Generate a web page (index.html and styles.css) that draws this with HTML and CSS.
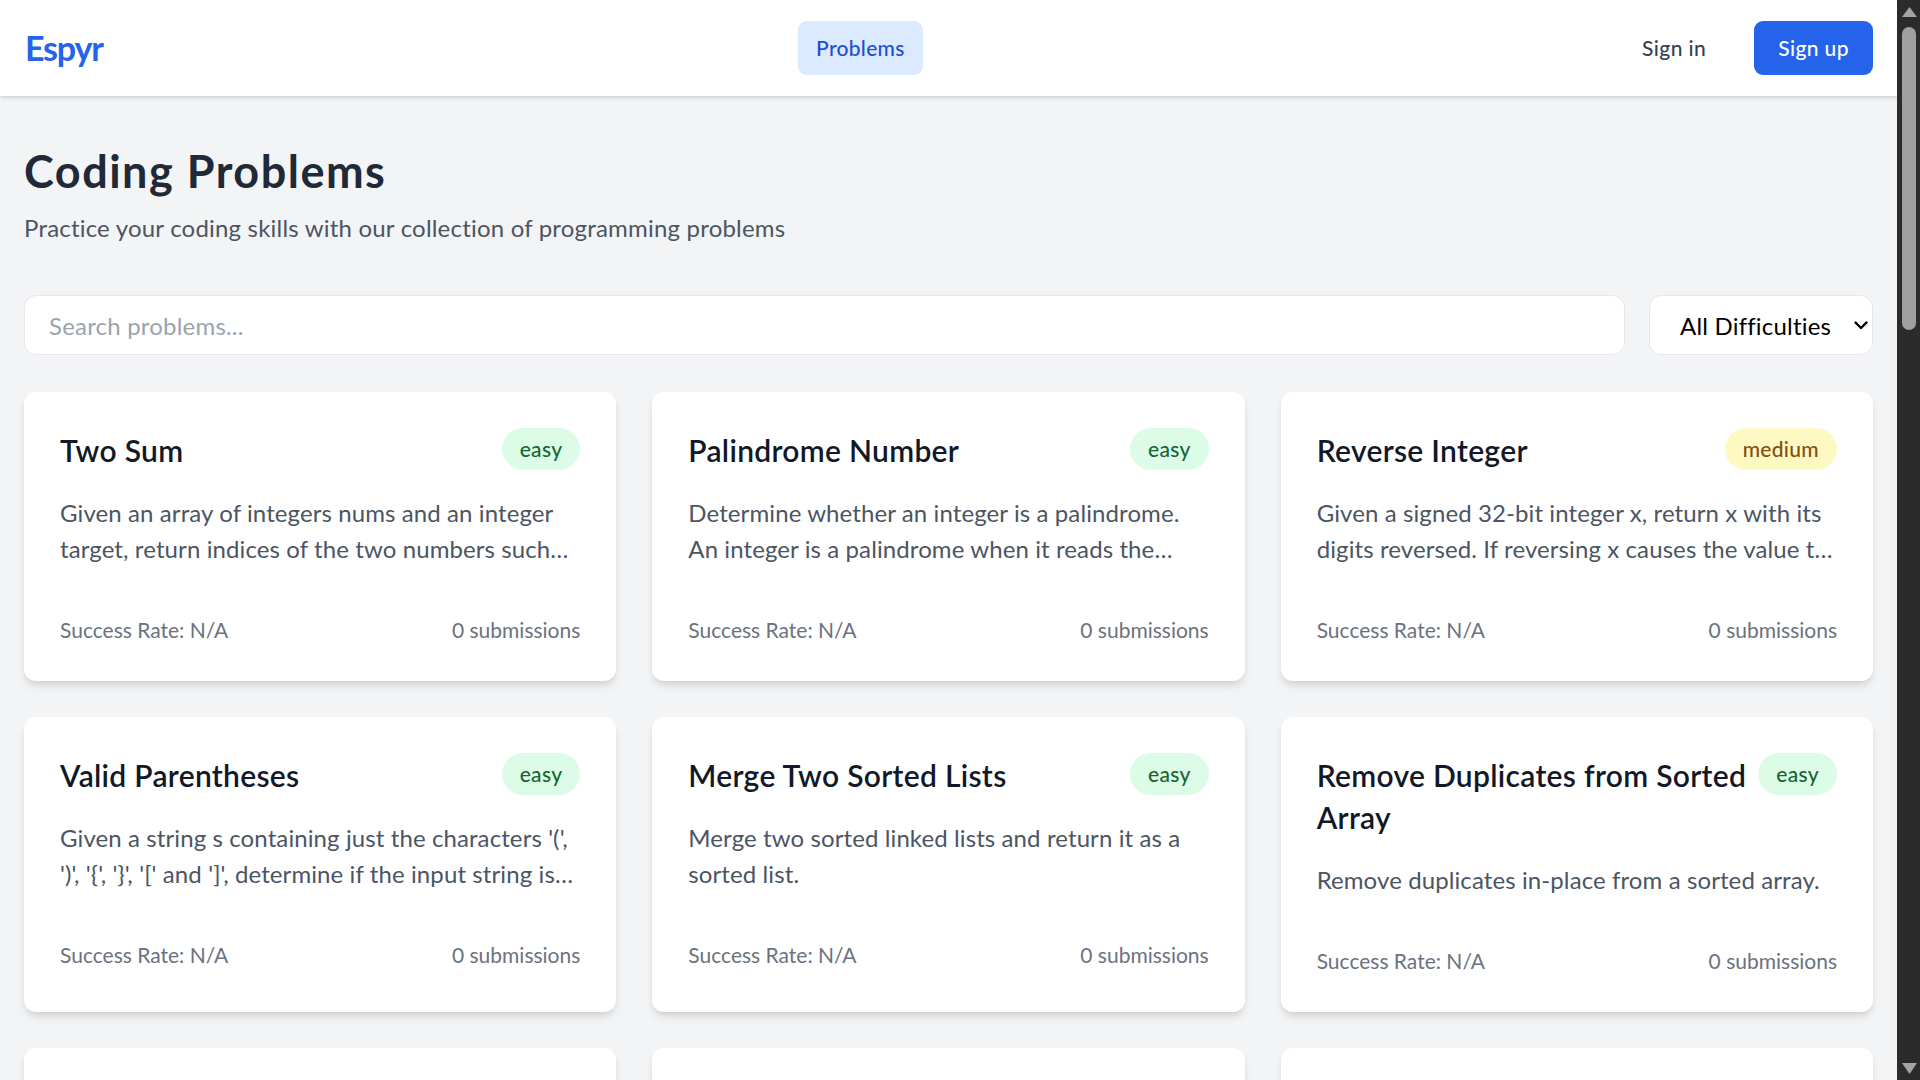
FILE: index.html
```html
<!DOCTYPE html>
<html lang="en">
<head>
<meta charset="utf-8">
<title>Espyr - Coding Problems</title>
<link rel="stylesheet" href="styles.css">
</head>
<body>
<div class="page">
  <nav class="nav">
    <div class="nav-inner">
      <a class="logo" href="#">Espyr</a>
      <div class="nav-links">
        <a class="nav-link active" href="#">Problems</a>
      </div>
      <div class="auth">
        <a class="btn btn-ghost" href="#">Sign in</a>
        <a class="btn btn-primary" href="#">Sign up</a>
      </div>
    </div>
  </nav>

  <main class="main">
    <header class="page-head">
      <h1 class="title">Coding Problems</h1>
      <p class="subtitle">Practice your coding skills with our collection of programming problems</p>
    </header>

    <div class="filters">
      <input class="search" type="text" placeholder="Search problems...">
      <div class="select-wrap">
        <select class="select">
          <option>All Difficulties</option>
          <option>Easy</option>
          <option>Medium</option>
          <option>Hard</option>
        </select>
        <svg class="chevron" width="14" height="9" viewBox="0 0 14 9"><path d="M1.5 1.5 L7 7 L12.5 1.5" fill="none" stroke="#000" stroke-width="2.4" stroke-linecap="round" stroke-linejoin="round"/></svg>
      </div>
    </div>

    <div class="grid">
      <div class="card">
        <div class="card-head">
          <h3 class="card-title">Two Sum</h3>
          <span class="badge easy">easy</span>
        </div>
        <p class="desc">Given an array of integers nums and an integer target, return indices of the two numbers such that they add up to target.</p>
        <div class="meta"><span>Success Rate: N/A</span><span>0 submissions</span></div>
      </div>

      <div class="card">
        <div class="card-head">
          <h3 class="card-title">Palindrome Number</h3>
          <span class="badge easy">easy</span>
        </div>
        <p class="desc">Determine whether an integer is a palindrome. An integer is a palindrome when it reads the same backward as forward.</p>
        <div class="meta"><span>Success Rate: N/A</span><span>0 submissions</span></div>
      </div>

      <div class="card">
        <div class="card-head">
          <h3 class="card-title">Reverse Integer</h3>
          <span class="badge medium">medium</span>
        </div>
        <p class="desc">Given a signed 32-bit integer x, return x with its digits reversed. If reversing x causes the value to go outside the signed 32-bit integer range, return 0.</p>
        <div class="meta"><span>Success Rate: N/A</span><span>0 submissions</span></div>
      </div>

      <div class="card">
        <div class="card-head">
          <h3 class="card-title">Valid Parentheses</h3>
          <span class="badge easy">easy</span>
        </div>
        <p class="desc">Given a string s containing just the characters '(', ')', '{', '}', '[' and ']', determine if the input string is valid.</p>
        <div class="meta"><span>Success Rate: N/A</span><span>0 submissions</span></div>
      </div>

      <div class="card">
        <div class="card-head">
          <h3 class="card-title">Merge Two Sorted Lists</h3>
          <span class="badge easy">easy</span>
        </div>
        <p class="desc">Merge two sorted linked lists and return it as a sorted list.</p>
        <div class="meta"><span>Success Rate: N/A</span><span>0 submissions</span></div>
      </div>

      <div class="card">
        <div class="card-head">
          <h3 class="card-title">Remove Duplicates from Sorted Array</h3>
          <span class="badge easy">easy</span>
        </div>
        <p class="desc">Remove duplicates in-place from a sorted array.</p>
        <div class="meta"><span>Success Rate: N/A</span><span>0 submissions</span></div>
      </div>

      <div class="card">
        <div class="card-head">
          <h3 class="card-title">Remove Element</h3>
          <span class="badge easy">easy</span>
        </div>
        <p class="desc">Remove all occurrences of a value in-place and return the number of remaining elements.</p>
        <div class="meta"><span>Success Rate: N/A</span><span>0 submissions</span></div>
      </div>

      <div class="card">
        <div class="card-head">
          <h3 class="card-title">Search Insert Position</h3>
          <span class="badge easy">easy</span>
        </div>
        <p class="desc">Given a sorted array and a target value, return the index if the target is found.</p>
        <div class="meta"><span>Success Rate: N/A</span><span>0 submissions</span></div>
      </div>

      <div class="card">
        <div class="card-head">
          <h3 class="card-title">Climbing Stairs</h3>
          <span class="badge easy">easy</span>
        </div>
        <p class="desc">You are climbing a staircase. It takes n steps to reach the top.</p>
        <div class="meta"><span>Success Rate: N/A</span><span>0 submissions</span></div>
      </div>
    </div>
  </main>
</div>

<div class="scrollbar">
  <div class="sb-btn">
    <svg width="15" height="10" viewBox="0 0 15 10"><polygon points="7.5,0 15,10 0,10" fill="#a3a3a3"/></svg>
  </div>
  <div class="sb-track">
    <div class="sb-thumb"></div>
  </div>
  <div class="sb-btn sb-btn-down">
    <svg width="15" height="11" viewBox="0 0 15 11"><polygon points="0,0 15,0 7.5,11" fill="#a3a3a3"/></svg>
  </div>
</div>
</body>
</html>
```

FILE: styles.css
```css
* {
  box-sizing: border-box;
}

html,
body {
  margin: 0;
  height: 100%;
}

body {
  display: flex;
  overflow: hidden;
  font-family: Lato, "Noto Sans", sans-serif;
  background: #f3f4f6;
  color: #111827;
}

a {
  text-decoration: none;
}

.page {
  flex: 1;
  min-width: 0;
  height: 100vh;
  overflow: hidden;
  background: #f3f4f6;
}

/* NAV */
.nav {
  position: relative;
  z-index: 2;
  height: 96px;
  background: #ffffff;
  box-shadow: 0 1.5px 4.5px rgba(0, 0, 0, 0.1), 0 1.5px 3px rgba(0, 0, 0, 0.06);
}

.nav-inner {
  height: 100%;
  padding: 0 24px;
  display: flex;
  align-items: center;
  justify-content: space-between;
}

.logo {
  font-size: 34px;
  line-height: 48px;
  font-weight: 700;
  letter-spacing: -1.2px;
  color: #2563eb;
  padding-left: 1px;
}

.nav-links {
  display: flex;
  gap: 12px;
}

.nav-link {
  font-size: 21px;
  line-height: 30px;
  font-weight: 500;
  letter-spacing: 0.3px;
  padding: 12px 18px;
  border-radius: 9px;
  color: #374151;
}

.nav-link.active {
  background: #dbeafe;
  color: #1d4ed8;
}

.auth {
  display: flex;
  align-items: center;
  gap: 24px;
}

.btn {
  font-size: 21px;
  line-height: 30px;
  font-weight: 500;
  letter-spacing: 0.4px;
  padding: 12px 24px;
  border-radius: 9px;
}

.btn-ghost {
  color: #374151;
}

.btn-primary {
  background: #2563eb;
  color: #ffffff;
}

/* MAIN */
.main {
  padding: 48px 24px;
}

.page-head {
  margin-bottom: 49px;
}

.title {
  margin: 0 0 12px;
  font-size: 45px;
  line-height: 54px;
  font-weight: 700;
  letter-spacing: 1.5px;
  color: #1f2937;
}

.subtitle {
  margin: 0;
  font-size: 24px;
  line-height: 36px;
  letter-spacing: 0.2px;
  color: #4b5563;
}

.filters {
  display: flex;
  gap: 24px;
  margin-bottom: 37px;
}

.search {
  flex: 1;
  height: 60px;
  padding: 0 24px;
  border: 1.5px solid #e5e7eb;
  border-radius: 12px;
  background: #ffffff;
  font-family: inherit;
  font-size: 24px;
  letter-spacing: 0.2px;
  color: #111827;
  outline: none;
}

.search::placeholder {
  color: #9ca3af;
}

.select-wrap {
  position: relative;
  width: 224px;
}

.select {
  width: 100%;
  height: 60px;
  padding: 0 0 0 30px;
  border: 1.5px solid #e5e7eb;
  border-radius: 12px;
  background: #ffffff;
  font-family: inherit;
  font-size: 24px;
  letter-spacing: 0.2px;
  color: #000000;
  appearance: none;
  -webkit-appearance: none;
  outline: none;
}

.chevron {
  position: absolute;
  right: 5px;
  top: 26px;
  pointer-events: none;
}

/* GRID */
.grid {
  display: grid;
  grid-template-columns: repeat(3, 1fr);
  gap: 36px;
}

.card {
  background: #ffffff;
  border-radius: 12px;
  padding: 36px;
  box-shadow: 0 6px 9px -1.5px rgba(0, 0, 0, 0.1), 0 3px 6px -3px rgba(0, 0, 0, 0.1);
}

.card-head {
  display: flex;
  justify-content: space-between;
  align-items: flex-start;
  gap: 12px;
  margin-bottom: 24px;
}

.card-title {
  margin: 0;
  padding-top: 1px;
  font-size: 30px;
  line-height: 42px;
  font-weight: 600;
  letter-spacing: 0.3px;
  color: #111827;
}

.badge {
  flex-shrink: 0;
  white-space: nowrap;
  font-size: 21px;
  line-height: 30px;
  font-weight: 500;
  letter-spacing: 0.3px;
  padding: 6px 18px;
  border-radius: 9999px;
}

.badge.easy {
  background: #dcfce7;
  color: #166534;
}

.badge.medium {
  background: #fef9c3;
  color: #854d0e;
}

.desc {
  margin: 0 0 48px;
  font-size: 24px;
  line-height: 36px;
  letter-spacing: 0.1px;
  color: #4b5563;
  display: -webkit-box;
  -webkit-line-clamp: 2;
  -webkit-box-orient: vertical;
  overflow: hidden;
}

.meta {
  display: flex;
  justify-content: space-between;
  font-size: 21px;
  line-height: 30px;
  color: #6b7280;
}

/* SCROLLBAR */
.scrollbar {
  width: 23px;
  height: 100vh;
  flex-shrink: 0;
  background: #2b2b2b;
  display: flex;
  flex-direction: column;
}

.sb-btn {
  height: 22px;
  display: flex;
  justify-content: center;
  align-items: flex-start;
  padding-top: 7px;
  padding-left: 1px;
}

.sb-btn-down {
  padding-top: 5px;
}

.sb-track {
  flex: 1;
  padding: 5px 4px 0 5px;
}

.sb-thumb {
  height: 303px;
  background: #a0a0a0;
  border-radius: 7px;
}
```
